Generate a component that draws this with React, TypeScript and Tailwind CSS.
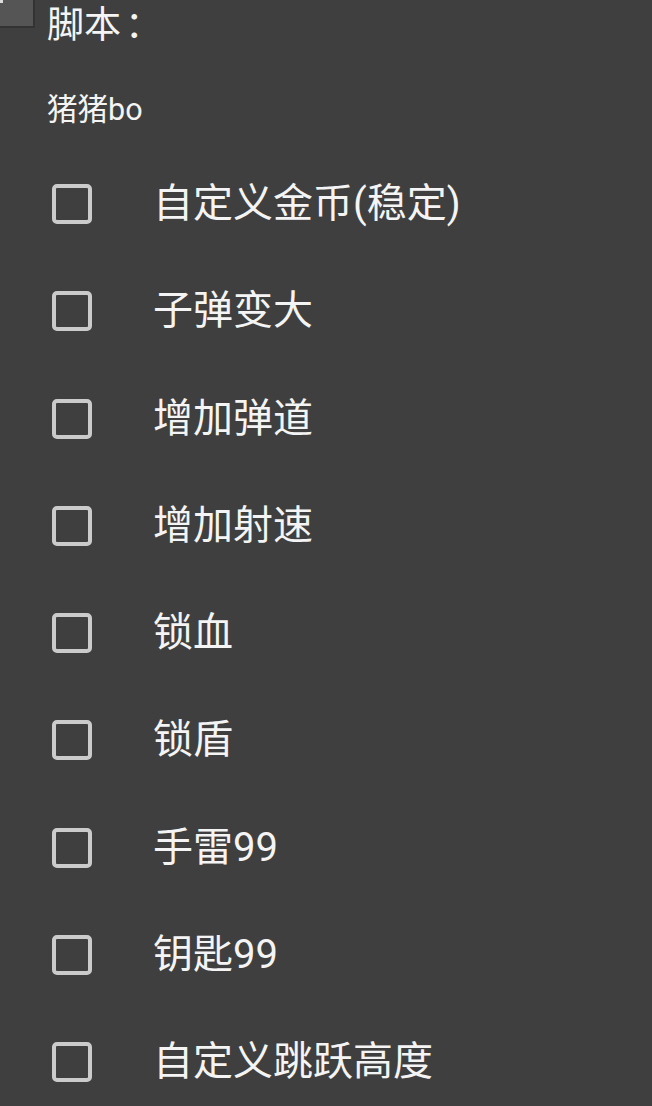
const options = [
  '自定义金币(稳定)',
  '子弹变大',
  '增加弹道',
  '增加射速',
  '锁血',
  '锁盾',
  '手雷99',
  '钥匙99',
  '自定义跳跃高度',
]

function Checkbox() {
  return <div className="h-[40px] w-[40px] shrink-0 rounded-[5px] border-4 border-[#cbcbcb]" />
}

export default function App() {
  return (
    <div
      className="relative h-[1106px] w-[652px] overflow-hidden bg-[#3f3f3f] text-[#f4f4f4]"
      style={{ fontFamily: 'Roboto, "Noto Sans CJK SC", sans-serif' }}
    >
      {/* leftover panel edge in the corner */}
      <div className="absolute left-0 top-0 h-[28px] w-[35px] border-b-2 border-r-2 border-[#333] bg-[#555]">
        <div className="h-[3px] w-[3px] bg-[#ddd]" />
      </div>

      <div className="pl-[47px]">
        <div className="pt-[2px] text-[37px] leading-[48px]">
          脚本<span className="ml-[4px]">：</span>
        </div>
        <div className="mt-[42px] text-[30.5px] leading-[36px]">猪猪bo</div>
      </div>

      <div className="mt-[22.4px] flex flex-col pl-[52px]">
        {options.map((label) => (
          <div key={label} className="flex h-[107.25px] items-center">
            <Checkbox />
            <span className="ml-[61px] text-[40px] leading-[52px]">{label}</span>
          </div>
        ))}
      </div>
    </div>
  )
}
